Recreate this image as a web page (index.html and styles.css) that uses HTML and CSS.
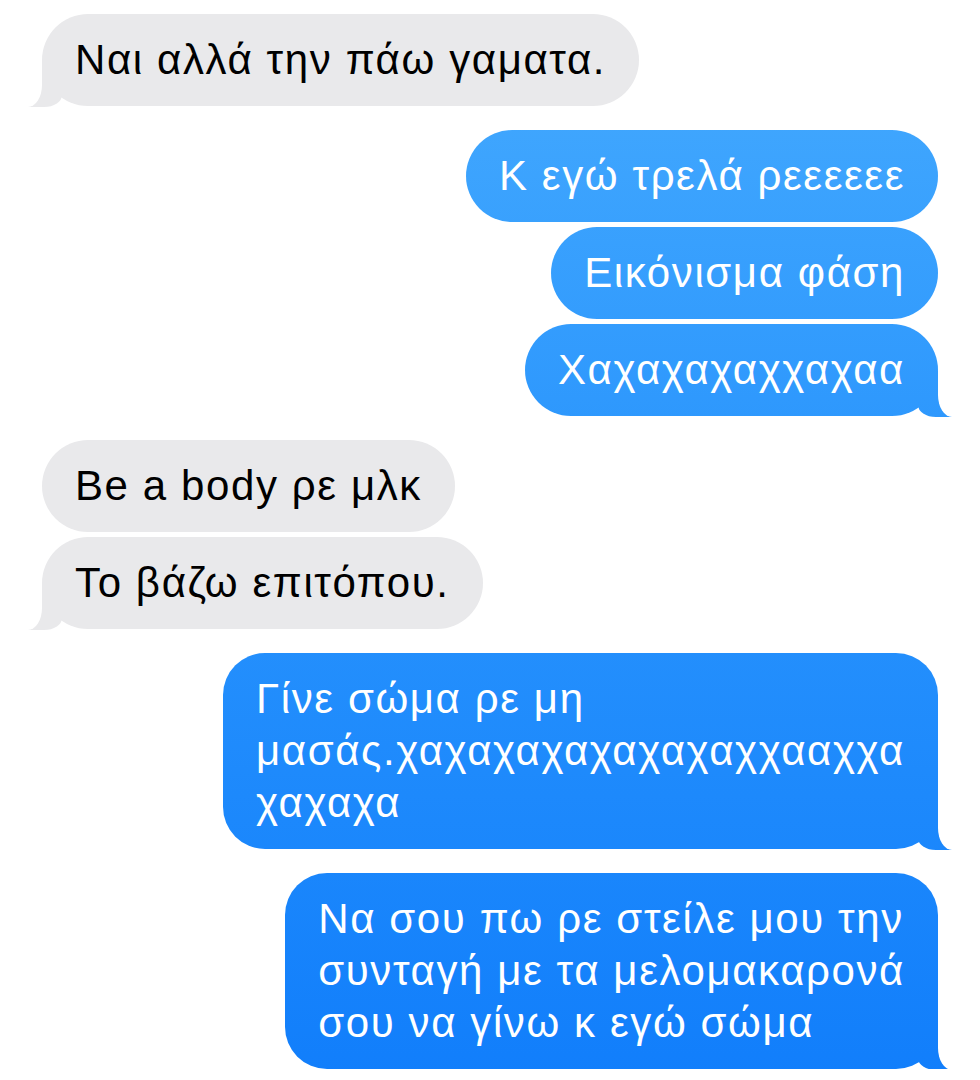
FILE: index.html
```html
<!DOCTYPE html>
<html lang="el">
<head>
<meta charset="utf-8">
<title>Messages</title>
<link rel="stylesheet" href="styles.css">
</head>
<body>
<div class="chat">
  <div class="msg in tail">Ναι αλλά την πάω γαματα.</div>

  <div class="msg out group">Κ εγώ τρελά ρεεεεεε</div>
  <div class="msg out stack">Εικόνισμα φάση</div>
  <div class="msg out stack tail">Χαχαχαχαχχαχαα</div>

  <div class="msg in group">Be a body ρε μλκ</div>
  <div class="msg in stack tail">Το βάζω επιτόπου.</div>

  <div class="msg out group multi tail">Γίνε σώμα ρε μη<br>μασάς.χαχαχαχαχαχαχαχχααχχα<br>χαχαχα</div>

  <div class="msg out group multi tail">Να σου πω ρε στείλε μου την<br>συνταγή με τα μελομακαρονά<br>σου να γίνω κ εγώ σώμα</div>
</div>
</body>
</html>
```

FILE: styles.css
```css
html, body {
  margin: 0;
  background: #ffffff;
}

body {
  font-family: "Liberation Sans", Arial, "Noto Sans", sans-serif;
}

.chat {
  display: flex;
  flex-direction: column;
  padding: 14px 42px 0;
}

.msg {
  position: relative;
  z-index: 0;
  padding: 20px 33px;
  font-size: 42px;
  letter-spacing: 1.6px;
  line-height: 52px;
  border-radius: 46px;
  white-space: nowrap;
}

.msg.multi {
  border-radius: 42px;
}

.stack {
  margin-top: 5px;
}

.group {
  margin-top: 24px;
}

.in {
  align-self: flex-start;
  background: #e9e9eb;
  color: #000000;
}

.out {
  align-self: flex-end;
  color: #ffffff;
  background: linear-gradient(180deg, #46abfe 0%, #2a95fd 45%, #117efb 100%) fixed;
}

/* tails */
.tail::before,
.tail::after {
  content: "";
  position: absolute;
  z-index: -1;
  bottom: -1px;
}

.out.tail::before {
  right: -14px;
  width: 34px;
  height: 46px;
  background: inherit;
  border-bottom-left-radius: 18px 12px;
}

.out.tail::after {
  left: 100%;
  width: 20px;
  height: 56px;
  background: #ffffff;
  border-bottom-left-radius: 14px 22px;
}

.in.tail::before {
  left: -14px;
  width: 34px;
  height: 46px;
  background: #e9e9eb;
  border-bottom-right-radius: 18px 12px;
}

.in.tail::after {
  right: 100%;
  width: 20px;
  height: 56px;
  background: #ffffff;
  border-bottom-right-radius: 14px 22px;
}
```
